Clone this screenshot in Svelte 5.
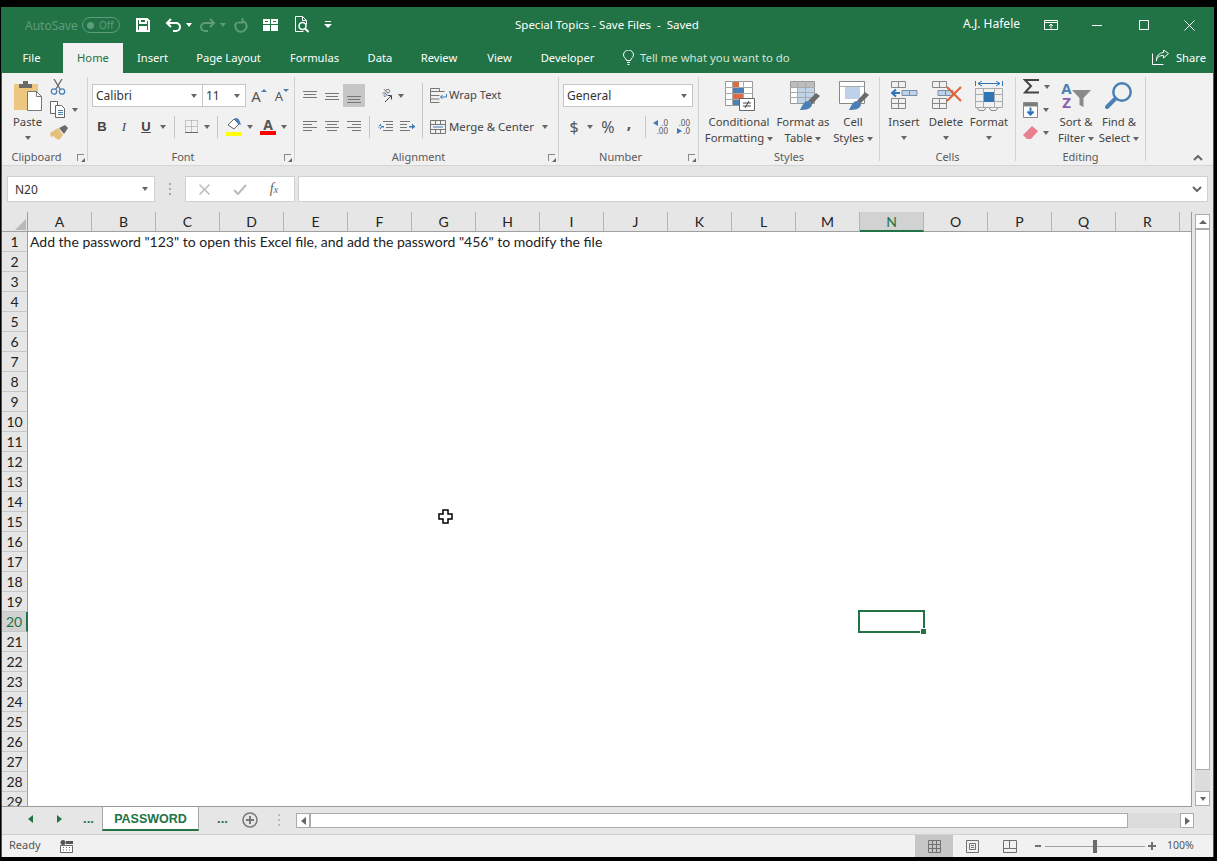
<script>
  const tabs = [
    ['File', 61], ['Home', 60], ['Insert', 59], ['Page Layout', 93], ['Formulas', 79],
    ['Data', 52], ['Review', 66], ['View', 55], ['Developer', 81]
  ];
  const cols = 'ABCDEFGHIJKLMNOPQR'.split('');
  const rows = Array.from({ length: 29 }, (_, i) => i + 1);
</script>

<div class="window">
  <header class="titlebar">
    <div class="qat">
      <span class="autosave">AutoSave</span>
      <span class="toggle"><i></i><b>Off</b></span>
      <span class="q q1"><svg width="16" height="16" viewBox="0 0 16 16" fill="none" stroke="#fff" stroke-width="2"><path d="M2 2h10l2 2v10H2z"/><path d="M5 2v4h6V2"/><path d="M5 14v-4h6v4" fill="#fff"/></svg></span>
      <span class="q q2"><svg width="17" height="14" viewBox="0 0 17 14" fill="none" stroke="#fff" stroke-width="2"><path d="M6 1 2 5l4 4M2 5h9a4 4 0 0 1 0 8H8"/></svg></span>
      <span class="car white"></span>
      <span class="q q3"><svg width="17" height="14" viewBox="0 0 17 14" fill="none" stroke="#5e9c7b" stroke-width="2"><path d="m11 1 4 4-4 4m4-4H6a4 4 0 0 0 0 8h3"/></svg></span>
      <span class="car dim"></span>
      <span class="q q4"><svg width="15" height="15" viewBox="0 0 15 15" fill="none" stroke="#5e9c7b" stroke-width="2"><path d="M9.500 2.800a5.600 5.600 0 1 1-5.500 1.400M9.500 0v4.500H5"/></svg></span>
      <span class="q q5"><svg width="16" height="14" viewBox="0 0 16 14" fill="#fff"><path d="M0 1h7v5H0zM8 1h7v5H8zM0 7h7v6H0zM8 7h7v6H8z"/><path d="M2 3h3v1H2zM10 3h3v1h-3z" fill="#217346"/></svg></span>
      <span class="q q6"><svg width="16" height="18" viewBox="0 0 16 18" fill="none" stroke="#fff"><path d="M1.500.500h7l4 4v4M8.500.500v4h4M1.500.500v15h8"/><circle cx="8.500" cy="10" r="3.500" stroke-width="1.500"/><path d="m11 12.500 3.500 3.500" stroke-width="2"/></svg></span>
      <span class="q q7"><svg width="8" height="8" viewBox="0 0 8 8" fill="#fff"><path d="M1 0h6v1H1zM0 3h8L4 7z"/></svg></span>
    </div>
    <div class="doc">Special Topics - Save Files&nbsp; - &nbsp;Saved</div>
    <div class="user">A.J. Hafele</div>
    <div class="ctl"><svg width="14" height="10" viewBox="0 0 14 10" fill="none" stroke="#fff"><path d="M.5.500h13v9H.5zM.5 2.500h13M7 8.500V4M5 6l2-2 2 2"/></svg></div>
    <div class="ctl"><svg width="10" height="1" viewBox="0 0 10 1" fill="#fff"><path d="M0 0h10v1H0z"/></svg></div>
    <div class="ctl"><svg width="10" height="10" viewBox="0 0 10 10" fill="none" stroke="#fff"><path d="M.5.500h9v9h-9z"/></svg></div>
    <div class="ctl"><svg width="11" height="11" viewBox="0 0 11 11" fill="none" stroke="#fff"><path d="m.5.500 10 10m0-10-10 10"/></svg></div>
  </header>

  <nav class="tabs">
    {#each tabs as [name, w]}
      <span class="tab" class:active={name === 'Home'} style="width:{w}px">{name}</span>
    {/each}
    <span class="bulb"><svg width="11" height="15" viewBox="0 0 11 15" fill="none" stroke="#fff"><path d="M3.500 10.500C3 8 .5 7.500.5 5a5 5 0 0 1 10 0c0 2.500-2.500 3-3 5.500zM4 12.500h3M4.500 14.500h2"/></svg></span>
    <span class="tell">Tell me what you want to do</span>
    <span class="share"><svg width="17" height="15" viewBox="0 0 17 15" fill="none" stroke="#fff"><path d="M.5 3.500v11h11M4.500 11c0-4 3-5.500 7-5.500V8l5-4.500-5-3.500v2.500C7 3 4 6 4.500 11z"/></svg><span>Share</span></span>
  </nav>

  <section class="ribbon">
    <div class="group g-clip">
      <div class="body clip">
        <div class="big paste">
          <svg width="30" height="30" viewBox="0 0 30 30"><path d="M1 3h24v26H1z" fill="#edc77f"/><path d="M6 3h4V0h5v3h4v4H6z" fill="#6b6b6b"/><path d="M14.500 10.500h9l5 5v14h-14z" fill="#fff" stroke="#777"/><path d="M23.500 10.500v5h5" fill="none" stroke="#777"/></svg>
          <span class="t1">Paste</span><i class="car"></i>
        </div>
        <div class="clipcol">
          <span class="r19"><svg width="16" height="16" viewBox="0 0 16 16" fill="none"><path d="m4 0 6 10M12 0 6 10" stroke="#666" stroke-width="1.300"/><circle cx="4" cy="12.500" r="2.700" stroke="#4b80b6" stroke-width="1.300"/><circle cx="12" cy="12.500" r="2.700" stroke="#4b80b6" stroke-width="1.300"/></svg></span>
          <span class="r19"><svg width="16" height="17" viewBox="0 0 16 17" fill="#fff" stroke="#666"><path d="M.5.500h7v12h-7z"/><path d="M5.500 4.500h6l3 3v9h-9z"/><path d="M8 9.500h5M8 11.500h5M8 13.500h5" stroke="#4b80b6"/></svg><i class="car ml"></i></span>
          <span class="r19"><svg width="18" height="15" viewBox="0 0 18 15"><path d="M0 8 8 3l5 7-4 5-4-2-1-2-3 1z" fill="#e5c07b"/><path d="m9 3 6-3 3 3-4 6z" fill="#6a6a6a"/></svg></span>
        </div>
      </div>
      <div class="label lp">Clipboard<i class="launch"></i></div>
    </div>

    <div class="group g-font">
      <div class="body rows">
        <div class="row r1 pl4">
          <span class="box fontname">Calibri<i class="car"></i></span>
          <span class="box fontsize">11<i class="car"></i></span>
          <span class="cell w26 grow"><b class="biga">A</b><i class="up"></i></span>
          <span class="cell w20 grow"><b class="biga sm">A</b><i class="down"></i></span>
        </div>
        <div class="row r2 pl3">
          <span class="cell w22 btxt"><b>B</b></span>
          <span class="cell w22 btxt"><em>I</em></span>
          <span class="cell w22 btxt"><b class="u">U</b></span>
          <span class="cell w12"><i class="car"></i></span>
          <span class="sep m5"></span>
          <span class="cell w22"><svg width="13" height="13" viewBox="0 0 13 13" fill="none" stroke="#999" stroke-dasharray="1 1"><path d="M.5.500h12v12H.5zM6.500.500v12M.5 6.500h12"/><path d="M0 12.500h13" stroke="#666" stroke-dasharray="none"/></svg></span>
          <span class="cell w10"><i class="car"></i></span>
          <span class="sep m5"></span>
          <span class="cell w22"><svg width="17" height="19" viewBox="0 0 17 19"><path d="M2 8 8 2l5 5-5 5z" fill="#fff" stroke="#666"/><path d="M8 2c2-2 5-1 6 3l1 3-3-1z" fill="#4b80b6"/><path d="M0 15h16v4H0z" fill="#ff0"/></svg></span>
          <span class="cell w10"><i class="car"></i></span>
          <span class="cell w22 ml2 fc"><b>A</b><i></i></span>
          <span class="cell w10"><i class="car"></i></span>
        </div>
      </div>
      <div class="label lp">Font<i class="launch"></i></div>
    </div>

    <div class="group g-align">
      <div class="body split">
        <div class="rows alignleft">
          <div class="row r1 pl4">
            <span class="cell w22"><svg width="14" height="14" viewBox="0 0 14 14" fill="#777"><path d="M0 2h14v1H0zM1 5h12v1H1zM0 8h14v1H0z"/></svg></span>
            <span class="cell w22"><svg width="14" height="14" viewBox="0 0 14 14" fill="#777"><path d="M0 4h14v1H0zM1 7h12v1H1zM0 10h14v1H0z"/></svg></span>
            <span class="cell w22 on"><svg width="14" height="14" viewBox="0 0 14 14" fill="#777"><path d="M0 7h14v1H0zM1 10h12v1H1zM0 13h14v1H0z"/></svg></span>
            <span class="cell w24 ml8"><svg width="17" height="16" viewBox="0 0 17 16" fill="none" stroke="#666"><text x="6" y="10" class="ab" transform="rotate(-45 6 8)">ab</text><path d="m8 14 6-6M14.500 7.500v4M14.500 7.500h-4" stroke="#444"/></svg></span>
            <span class="cell w8"><i class="car"></i></span>
          </div>
          <div class="row r2 pl4">
            <span class="cell w22"><svg width="14" height="11" viewBox="0 0 14 11" fill="#777"><path d="M0 0h14v1H0zM0 3h9v1H0zM0 6h14v1H0zM0 9h9v1H0z"/></svg></span>
            <span class="cell w22"><svg width="14" height="11" viewBox="0 0 14 11" fill="#777"><path d="M0 0h14v1H0zM2 3h10v1H2zM0 6h14v1H0zM2 9h10v1H2z"/></svg></span>
            <span class="cell w22"><svg width="14" height="11" viewBox="0 0 14 11" fill="#777"><path d="M0 0h14v1H0zM5 3h9v1H5zM0 6h14v1H0zM5 9h9v1H5z"/></svg></span>
            <span class="sep m4"></span>
            <span class="cell w22 ml4c"><svg width="15" height="11" viewBox="0 0 15 11"><path d="M5 0h10v1H5zM8 3h7v1H8zM8 6h7v1H8zM5 9h10v1H5z" fill="#777"/><path d="M0 5h6v1.500H0zM3 2.500 0 5.500l3 3z" fill="#3d7ab8"/></svg></span>
            <span class="cell w22"><svg width="15" height="11" viewBox="0 0 15 11"><path d="M0 0h10v1H0zM0 3h7v1H0zM0 6h7v1H0zM0 9h10v1H0z" fill="#777"/><path d="M9 5h6v1.500H9zM12 2.500l3 3-3 3z" fill="#3d7ab8"/></svg></span>
          </div>
        </div>
        <div class="rows alignright">
          <div class="row r1"><svg width="17" height="15" viewBox="0 0 17 15" fill="none" stroke="#777"><path d="M.5.500h9v3h-9zM.5 3.500h14M.5 3.500v11h9M.5 7.500h9M.5 11h9"/><path d="M16.500 6v3h-6M12.500 7l-2 2 2 2" stroke="#3d7ab8"/></svg><span class="lbl wrap">Wrap Text</span></div>
          <div class="row r2"><svg width="16" height="14" viewBox="0 0 16 14" fill="none" stroke="#777"><path d="M.5.500h15v13H.5zM.5 4.500h15M.5 9.500h15M5.500.500v4M10.500.500v4M5.500 9.500v4M10.500 9.500v4"/><path d="M3 7h10" stroke="#3d7ab8"/></svg><span class="lbl">Merge &amp; Center</span><i class="car mergecar"></i></div>
        </div>
      </div>
      <div class="label lp">Alignment<i class="launch"></i></div>
    </div>

    <div class="group g-num">
      <div class="body rows">
        <div class="row r1 pl4"><span class="box numfmt">General<i class="car"></i></span></div>
        <div class="row r2 pl4">
          <span class="cell w22 sym">$</span>
          <span class="cell w10"><i class="car"></i></span>
          <span class="cell w26 sym">%</span>
          <span class="cell w16 sym comma">,</span>
          <span class="sep m8"></span>
          <span class="dec ml7">
            <span class="decline"><i class="al"></i><span>.0</span></span>
            <span class="decline end"><span>.00</span></span>
          </span>
          <span class="dec ml7">
            <span class="decline end"><span>.00</span></span>
            <span class="decline"><i class="ar"></i><span>.0</span></span>
          </span>
        </div>
      </div>
      <div class="label lp">Number<i class="launch"></i></div>
    </div>

    <div class="group g-styles">
      <div class="body flexrow">
        <div class="big w80">
          <svg class="s1" width="30" height="30" viewBox="0 0 30 30"><path d="M.5.500h27v24H.5z" fill="#fff" stroke="#999"/><path d="M7.500 0v25M18.500 0v25M0 6.500h28M0 12.500h28M0 18.500h28" stroke="#aaa"/><path d="M8 1h6v5H8zM8 13h10v5H8z" fill="#dd6b45"/><path d="M8 7h11v5H8zM8 19h6v5H8z" fill="#4b80b6"/><path d="M14.500 17.500h15v12h-15z" fill="#fff" stroke="#666"/><path d="M18 22h8M18 25h8M24 20l-4 7" stroke="#444" fill="none"/></svg>
          <span class="t1">Conditional</span><span class="t2">Formatting<i class="car ml3"></i></span>
        </div>
        <div class="big w48">
          <svg class="s4" width="30" height="30" viewBox="0 0 30 30"><path d="M.5.500h24v22H.5z" fill="#fff" stroke="#999"/><path d="M1 1h23v5H1z" fill="#bdbdbd"/><path d="M7 6h17v16H7z" fill="#c0d4e8"/><path d="M7.500 0v23M15.500 0v23M0 6.500h25M0 11.500h25M0 16.500h25" stroke="#aaa"/><path d="m18 20 8-8 4 3-8 8z" fill="#6b6b6b"/><path d="M18 20c-4 0-6 5-8 9 6 0 12-1 12-6z" fill="#4b80b6"/></svg>
          <span class="t1 nowrap">Format as</span><span class="t2">Table<i class="car ml3"></i></span>
        </div>
        <div class="big w52">
          <svg class="s2" width="30" height="30" viewBox="0 0 30 30"><path d="M.5.500h25v22H.5z" fill="#fff" stroke="#888"/><path d="M.5 5.500h25" stroke="#aaa"/><path d="M6 6h15v12H6z" fill="#bdd2e8"/><path d="m18 20 8-9 4 3-9 9z" fill="#6b6b6b"/><path d="M18 20c-4 0-6 5-8 9 6 0 12-1 12-6z" fill="#4b80b6"/></svg>
          <span class="t1">Cell</span><span class="t2">Styles<i class="car ml3"></i></span>
        </div>
      </div>
      <div class="label">Styles</div>
    </div>

    <div class="group g-cells">
      <div class="body flexrow">
        <div class="big w48">
          <svg class="s1" width="27" height="30" viewBox="0 0 27 30" fill="none" stroke="#888"><path d="M.5.500h14v6H.5zM7.500.500v6M.5 17.500h14v10H.5zM.5 22.500h14M7.500 17.500v10"/><path d="M11 9.500h15v5H11zM18.500 9.500v5" fill="#bdd2e8" stroke="#7a8ea3"/><path d="M1 12h8M5 8.500 1 12l4 3.500" stroke="#2f75b5" stroke-width="2"/></svg>
          <span class="t1">Insert</span><i class="car big-car"></i>
        </div>
        <div class="big w36">
          <svg class="s2" width="30" height="30" viewBox="0 0 30 30" fill="none" stroke="#888"><path d="M.5.500h14v6H.5zM7.500.500v6M.5 17.500h14v10H.5zM.5 22.500h14M7.500 17.500v10"/><path d="M6 9.500h15v5H6zM13.500 9.500v5" fill="#bdd2e8" stroke="#7a8ea3"/><path d="m15 6 14 14M29 6 15 20" stroke="#e0663a" stroke-width="2.200"/></svg>
          <span class="t1">Delete</span><i class="car big-car"></i>
        </div>
        <div class="big w50">
          <svg width="29" height="30" viewBox="0 0 29 30" fill="none" stroke="#888"><path d="M.5 0v5M27.500 0v5M3 2.500h22M7 0 3 2.500 7 5M21 0l4 2.500L21 5" stroke="#2f75b5"/><path d="M.5 7.500h27v19H.5zM8.500 7.500v19M19.500 7.500v19M.5 13.500h27M.5 20.500h27" stroke="#aaa"/><path d="M9 11h10v10H9z" fill="#2f75b5" stroke="none"/><path d="M2 26.500l2 3h5l2-3M14 26.500l2 3h5l2-3"/></svg>
          <span class="t1">Format</span><i class="car big-car"></i>
        </div>
      </div>
      <div class="label">Cells</div>
    </div>

    <div class="group g-edit">
      <div class="body flexrow">
        <div class="clipcol editcol">
          <span class="r19"><svg width="16" height="15" viewBox="0 0 16 15" fill="none" stroke="#444" stroke-width="2"><path d="M16 1H2l6 6-6 6.500h14"/></svg><i class="car ml4"></i></span>
          <span class="r19"><svg width="15" height="16" viewBox="0 0 15 16" fill="#fff" stroke="#888"><path d="M.5.500h14v15H.5z"/><path d="M1 1h13v3H1z" fill="#777"/><path d="M7.500 5.500v7M4.500 9.500l3 3 3-3" stroke="#2f75b5" stroke-width="2" fill="none"/></svg><i class="car ml4"></i></span>
          <span class="r19"><svg width="15" height="14" viewBox="0 0 15 14"><path d="M9 0l6 5-7 8H4L0 9z" fill="#e8808f"/></svg><i class="car ml4"></i></span>
        </div>
        <div class="big w40">
          <svg width="30" height="30" viewBox="0 0 30 30"><path d="M11 9h19l-7.500 8v9l-4-2v-7z" fill="#8a8a8a"/><text x="5.500" y="13" class="az a">A</text><text x="5.500" y="27" class="az z">Z</text></svg>
          <span class="t1">Sort &amp;</span><span class="t2">Filter<i class="car ml3"></i></span>
        </div>
        <div class="big w46">
          <svg width="28" height="30" viewBox="0 0 28 30" fill="none" stroke="#4b80b6"><circle cx="17" cy="11" r="8.700" stroke-width="2.500"/><path d="m10 18-8 8" stroke-width="4" stroke-linecap="round"/></svg>
          <span class="t1">Find &amp;</span><span class="t2">Select<i class="car ml3"></i></span>
        </div>
      </div>
      <div class="label">Editing</div>
    </div>

    <div class="collapse"><svg width="10" height="6" viewBox="0 0 10 6" fill="none" stroke="#666" stroke-width="2"><path d="m1 5 4-4 4 4"/></svg></div>
  </section>

  <section class="formula">
    <div class="namebox">N20<i class="car"></i></div>
    <div class="dots"></div>
    <div class="fxbox">
      <span class="cell fxc"><svg width="11" height="11" viewBox="0 0 11 11" fill="none" stroke="#bbb" stroke-width="1.500"><path d="m.5.500 10 10m0-10-10 10"/></svg></span>
      <span class="cell fxc"><svg width="14" height="11" viewBox="0 0 14 11" fill="none" stroke="#bbb" stroke-width="2"><path d="m1 6 4 4 8-9"/></svg></span>
      <span class="cell fxc fx">f<small>x</small></span>
    </div>
    <div class="finput"><svg width="10" height="6" viewBox="0 0 10 6" fill="none" stroke="#666" stroke-width="2"><path d="m1 1 4 4 4-4"/></svg></div>
  </section>

  <section class="sheet">
    <div class="grid">
      <div class="corner"><i></i></div>
      {#each cols as c}
        <div class="ch" class:hl={c === 'N'}>{c}</div>
      {/each}
      <div class="ch filler"></div>
      {#each rows as r}
        <div class="rh" class:hl={r === 20}>{r}</div>
        {#if r === 1}
          <div class="text">Add the password "123" to open this Excel file, and add the password "456" to modify the file</div>
        {/if}
      {/each}
      <div class="sel"><i></i></div>
    </div>
    <div class="vscroll">
      <span class="sbtn"><i class="tri-up"></i></span>
      <span class="vthumb"></span>
      <span class="sbtn"><i class="car"></i></span>
    </div>
    <svg class="pointer" width="15" height="15" viewBox="0 0 15 15"><path d="M5 1h5v4h4v5h-4v4H5v-4H1V5h4z" fill="#fff" stroke="#000" stroke-width="1.500"/></svg>
  </section>

  <section class="sheetbar">
    <span class="nav w29"><i class="tl"></i></span>
    <span class="nav w29"><i class="tr"></i></span>
    <span class="nav w29 more">...</span>
    <span class="sheettab">PASSWORD</span>
    <span class="nav w46x more">...</span>
    <span class="plus"><svg width="16" height="16" viewBox="0 0 16 16" fill="none" stroke="#777"><circle cx="8" cy="8" r="7" stroke-width="1.500"/><path d="M8 4v8M4 8h8" stroke-width="2"/></svg></span>
    <span class="vdots"></span>
    <div class="hscroll">
      <span class="hbtn"><i class="tl gray"></i></span>
      <span class="hthumb"></span>
      <span class="htrack"></span>
      <span class="hbtn"><i class="tr gray"></i></span>
    </div>
  </section>

  <footer class="status">
    <span class="ready">Ready</span>
    <span class="macro"><svg width="13" height="13" viewBox="0 0 13 13"><circle cx="3" cy="2.500" r="2.500" fill="#555"/><path d="M6 1h7v3H6z" fill="#555"/><path d="M.5 5.500h12v7H.5z" fill="#fff" stroke="#666"/><path d="M3 7.500h1M6 7.500h1M9 7.500h1M3 10h1M6 10h1M9 10h1" stroke="#666"/></svg></span>
    <span class="viewbtn on"><svg width="13" height="13" viewBox="0 0 13 13" fill="none" stroke="#707070"><path d="M.5.500h12v12H.5zM4.500.500v12M8.500.500v12M.5 4.500h12M.5 8.500h12"/></svg></span>
    <span class="viewbtn"><svg width="13" height="13" viewBox="0 0 13 13" fill="none" stroke="#707070"><path d="M.5.500h12v12H.5zM3.500 3.500h6v6h-6zM5 5.500h3M5 7.500h3"/></svg></span>
    <span class="viewbtn"><svg width="14" height="13" viewBox="0 0 14 13" fill="none" stroke="#707070"><path d="M.5.500h13v12H.5zM.5 8.500h6M6.500.500v8M13 8.500H7"/></svg></span>
    <span class="minus"></span>
    <span class="slider"><i></i></span>
    <span class="zplus"></span>
    <span class="zoom">100%</span>
  </footer>
</div>

<style>
  :global(html), :global(body) { margin: 0; background: #000; overflow: hidden; }
  .window {
    box-sizing: border-box; width: 1213px; height: 850px; margin: 7px 0 0 1px;
    border: 1px solid #217346; border-top: 0; display: flex; flex-direction: column;
    font-family: "Noto Sans", sans-serif; font-size: 11.300px; color: #444; background: #e6e6e6;
  }
  i { display: block; font-style: normal; }
  svg { display: block; flex: none; }

  .titlebar { height: 36px; background: #217346; display: flex; align-items: center; color: #fff; flex: none; }
  .qat { width: 513px; display: flex; align-items: center; padding-left: 23px; box-sizing: border-box; flex: none; }
  .autosave { color: #5e9c7b; width: 50px; font-size: 12px; }
  .toggle { box-sizing: border-box; margin-left: 7px; width: 38px; height: 16px; border: 1px solid #5e9c7b; border-radius: 8px; display: flex; align-items: center; padding-left: 4px; color: #5e9c7b; gap: 5px; font-size: 10px; }
  .toggle i { width: 7px; height: 7px; border-radius: 50%; background: #5e9c7b; }
  .toggle b { font-weight: 400; }
  .q { display: flex; align-items: center; justify-content: center; }
  .q1 { margin-left: 15px; }
  .q2 { margin-left: 14px; }
  .q3 { margin-left: 7px; }
  .q4 { margin-left: 7px; }
  .q5 { margin-left: 15px; }
  .q6 { margin-left: 15px; }
  .q7 { margin-left: 14px; }
  .qat .car { margin-left: 4px; }
  .doc { flex: 1; font-size: 11.500px; white-space: nowrap; margin-top: -2px; }
  .user { margin-right: 8px; font-size: 12px; margin-top: -3px; }
  .ctl { width: 46.250px; display: flex; justify-content: center; }

  .car { width: 0; height: 0; border: 3.500px solid transparent; border-top: 4px solid #666; border-bottom: 0; flex: none; }
  .car.white { border-top-color: #fff; }
  .car.dim { border-top-color: #5e9c7b; }
  .ml { margin-left: 6px; }
  .ml3 { margin-left: 3px; display: inline-block; vertical-align: middle; }
  .ml4 { margin-left: 5px; }

  .tabs { height: 30px; background: #217346; display: flex; align-items: center; color: #fff; flex: none; font-size: 11.200px; }
  .tab { height: 30px; line-height: 30px; text-align: center; flex: none; white-space: nowrap; box-sizing: border-box; }
  .tab:first-child { padding-right: 2px; }
  .tab.active { background: #f1f1f1; color: #217346; }
  .bulb { margin-left: 15px; margin-top: -1px; }
  .tell { margin-left: 6px; color: #d3e3da; white-space: nowrap; font-size: 11.350px; margin-top: -2px; }
  .share { margin-left: auto; margin-right: 7px; display: flex; align-items: center; gap: 7px; margin-top: -2px; }

  .ribbon { height: 93px; background: #f1f1f1; border-bottom: 1px solid #d5d5d5; box-sizing: border-box; display: flex; flex: none; padding-top: 4px; position: relative; }
  .group { height: 84px; box-sizing: border-box; border-right: 1px solid #d2d2d2; display: flex; flex-direction: column; flex: none; }
  .body { height: 72px; flex: none; }
  .label { height: 16px; line-height: 16px; margin-bottom: -4px; text-align: center; color: #5a5a5a; position: relative; font-size: 11px; }
  .lp { padding-right: 16px; }
  .launch { position: absolute; right: 3px; top: 5px; width: 6px; height: 6px; border-left: 1px solid #888; border-top: 1px solid #888; }
  .launch::after { content: ""; position: absolute; right: -1px; bottom: -1px; border: 2px solid #666; border-top-color: transparent; border-left-color: transparent; }
  .g-clip { width: 86px; } .g-font { width: 207px; } .g-align { width: 264px; } .g-num { width: 140px; }
  .g-styles { width: 181px; } .g-cells { width: 136px; } .g-edit { width: 130px; }

  .big { display: flex; flex-direction: column; align-items: center; padding-top: 4px; flex: none; }
  .big svg { height: 30px; }
  .big svg.s1 { margin-left: 1px; } .big svg.s2 { margin-left: 2px; } .big svg.s4 { margin-left: 4px; }
  .t1 { height: 16px; line-height: 16px; margin-top: 3px; white-space: nowrap; }
  .t2 { height: 16px; line-height: 16px; white-space: nowrap; }
  .big > .car { margin-top: 6px; }
  .w80 { width: 80px; } .w48 { width: 48px; } .w52 { width: 52px; } .w36 { width: 36px; } .w50 { width: 50px; } .w40 { width: 40px; } .w46 { width: 46px; }
  .flexrow { display: flex; }
  .clip { display: flex; padding-left: 6px; }
  .paste { width: 39px; }
  .clipcol { display: flex; flex-direction: column; gap: 4px; margin-left: 3px; }
  .editcol { width: 37px; margin-left: 3px; padding-left: 4px; box-sizing: border-box; }
  .r19 { height: 19px; display: flex; align-items: center; }

  .rows { display: flex; flex-direction: column; padding-top: 7px; box-sizing: border-box; }
  .row { display: flex; align-items: center; }
  .r1 { height: 23px; }
  .r2 { height: 23px; margin-top: 8px; }
  .pl4 { padding-left: 4px; } .pl3 { padding-left: 3px; }
  .box { background: #fff; border: 1px solid #c6c6c6; box-sizing: border-box; height: 23px; display: flex; align-items: center; padding-left: 3px; justify-content: space-between; padding-right: 5px; font-size: 12px; color: #333; }
  .fontname { width: 111px; }
  .fontsize { width: 43px; border-left: 0; }
  .numfmt { width: 130px; }
  .cell { display: flex; align-items: center; justify-content: center; flex: none; height: 23px; }
  .on { background: #c6c6c6; }
  .w22 { width: 22px; } .w12 { width: 12px; } .w10 { width: 10px; } .w26 { width: 26px; } .w20 { width: 20px; } .w24 { width: 24px; } .w8 { width: 8px; } .w16 { width: 16px; }
  .ml2 { margin-left: 2px; } .ml8 { margin-left: 8px; } .ml7 { margin-left: 7px; } .ml4c { margin-left: 4px; }
  .sep { width: 1px; height: 22px; background: #c6c6c6; flex: none; }
  .m5 { margin: 0 5px; } .m4 { margin-left: 4px; } .m8 { margin-left: 8px; }
  .btxt { font-size: 13px; color: #444; font-family: "Liberation Sans", sans-serif; }
  .btxt em { font-family: "Liberation Serif", serif; }
  .u { text-decoration: underline; }
  .grow { position: relative; }
  .biga { font-size: 15px; font-weight: 400; color: #555; }
  .biga.sm { font-size: 13px; }
  .up, .down { border: 3px solid transparent; width: 0; height: 0; margin-top: -10px; }
  .up { border-top: 0; border-bottom: 3px solid #4b80b6; }
  .down { border-bottom: 0; border-top: 3px solid #4b80b6; }
  .fc { flex-direction: column; }
  .fc b { font: 700 14px/13px "Noto Sans", sans-serif; color: #555; }
  .fc i { width: 16px; height: 4px; background: #f00; }
  .ab { font: 8px "Noto Sans", sans-serif; fill: #666; stroke: none; }
  .dec { width: 15px; flex: none; display: flex; flex-direction: column; font-size: 8px; line-height: 8px; color: #555; }
  .decline { display: flex; align-items: center; justify-content: space-between; height: 8px; }
  .decline.end { justify-content: flex-end; }
  .al, .ar { width: 0; height: 0; border: 3px solid transparent; }
  .al { border-right: 5px solid #3d7ab8; border-left: 0; }
  .ar { border-left: 5px solid #3d7ab8; border-right: 0; margin-left: 2px; }
  .az { font: 700 15px "Noto Sans", sans-serif; text-anchor: middle; }
  .az.a { fill: #4b80b6; } .az.z { fill: #8a5cab; }
  .sym { font-size: 16px; color: #555; }
  .comma { font-weight: 700; padding-bottom: 8px; box-sizing: border-box; }

  .split { display: flex; }
  .alignleft { width: 128px; flex: none; position: relative; }
  .alignleft::after { content: ""; position: absolute; right: 0; top: 6px; height: 55px; width: 1px; background: #c6c6c6; }
  .alignright { padding-left: 7px; }
  .lbl { margin-left: 3px; font-size: 11.400px; white-space: nowrap; }
  .lbl.wrap { margin: -2px 0 0 2px; font-size: 11.200px; }
  .mergecar { margin-left: 8px; }

  .collapse { position: absolute; right: 10px; bottom: 4px; }

  .formula { height: 46px; flex: none; display: flex; padding-top: 10px; box-sizing: border-box; padding-left: 5px; }
  .namebox, .fxbox, .finput { height: 26px; box-sizing: border-box; border: 1px solid #d0d0d0; background: #fff; display: flex; align-items: center; }
  .namebox { width: 148px; padding: 0 6px 0 7px; justify-content: space-between; font-size: 12px; color: #333; }
  .dots { width: 2px; height: 12px; margin: 7px 14px 0 14px; background: repeating-linear-gradient(#aaa 0 2px, transparent 2px 5px); }
  .fxbox { width: 110px; }
  .fxc { width: 36px; }
  .fx { font: italic 14px "Liberation Serif", serif; color: #666; padding-right: 4px; box-sizing: border-box; }
  .fx small { font-size: 10px; }
  .finput { width: 910px; margin-left: 3px; justify-content: flex-end; padding-right: 5px; }

  .sheet { height: 595px; flex: none; display: flex; position: relative; }
  .grid {
    width: 1190px; height: 595px; flex: none; box-sizing: border-box; overflow: hidden; position: relative;
    display: grid; grid-template-columns: 26px repeat(18, 64px) 1fr; grid-auto-rows: 20px;
    background: #fff; border-bottom: 1px solid #9a9a9a; border-right: 1px solid #9a9a9a;
    font-family: "Lato", sans-serif; font-size: 14px; color: #222;
  }
  .corner { background: #e6e6e6; border-bottom: 1px solid #9f9f9f; border-right: 1px solid #9f9f9f; box-sizing: border-box; position: relative; }
  .corner i { position: absolute; right: 1px; bottom: 1px; width: 0; height: 0; border-left: 11px solid transparent; border-bottom: 11px solid #b8b8b8; }
  .ch { background: #e6e6e6; border-bottom: 1px solid #9f9f9f; border-right: 1px solid #b4b4b4; box-sizing: border-box; text-align: center; line-height: 20px; }
  .filler { border-right: 0; }
  .ch.hl { background: #d2d2d2; color: #217346; border-bottom: 2px solid #217346; }
  .rh { grid-column: 1; background: #e6e6e6; border-bottom: 1px solid #c6c6c6; border-right: 1px solid #9f9f9f; box-sizing: border-box; text-align: center; line-height: 20px; }
  .rh.hl { background: #d2d2d2; color: #217346; border-right: 2px solid #217346; }
  .text { grid-column: 2 / span 10; grid-row: 2; padding-left: 2px; line-height: 20px; white-space: nowrap; }
  .sel { grid-column: 15; grid-row: 21; outline: 2px solid #217346; margin: 0 1px 1px 0; position: relative; }
  .sel i { position: absolute; right: -3px; bottom: -3px; width: 5px; height: 5px; background: #217346; box-shadow: -1px -1px 0 #fff; }

  .vscroll { width: 15px; margin: 2px 0 0 3px; height: 592px; display: flex; flex-direction: column; background: #dcdcdc; }
  .sbtn { height: 15px; flex: none; background: #fff; border: 1px solid #ababab; box-sizing: border-box; display: flex; align-items: center; justify-content: center; }
  .tri-up { border: 4px solid transparent; border-bottom: 4px solid #666; border-top: 0; width: 0; height: 0; }
  .vthumb { height: 541px; flex: none; background: #fff; border: 1px solid #ababab; box-sizing: border-box; margin-bottom: auto; }
  .pointer { position: absolute; left: 436px; top: 297px; }

  .sheetbar { height: 27px; flex: none; display: flex; align-items: flex-start; }
  .nav { height: 24px; display: flex; align-items: center; justify-content: center; flex: none; }
  .w29 { width: 29px; }
  .nav:first-child { margin-left: 14px; }
  .more { color: #217346; font-weight: 700; font-size: 13px; padding-bottom: 2px; box-sizing: border-box; }
  .tl, .tr { width: 0; height: 0; border: 4px solid transparent; }
  .tl { border-right: 5px solid #217346; border-left: 0; }
  .tr { border-left: 5px solid #217346; border-right: 0; }
  .tl.gray { border-right-color: #666; } .tr.gray { border-left-color: #666; }
  .sheettab { width: 97px; height: 24px; box-sizing: border-box; background: #fff; border: 1px solid #a6a6a6; border-top: 0; border-bottom: 2px solid #217346; color: #217346; font-weight: 700; font-size: 12.500px; text-align: center; line-height: 25px; margin-left: -1px; font-family: "Liberation Sans", sans-serif; }
  .w46x { width: 47px; }
  .plus { margin: 5px 0 0 -4px; }
  .vdots { width: 2px; height: 12px; margin: 7px 16px 0 20px; background: repeating-linear-gradient(#bbb 0 2px, transparent 2px 5px); flex: none; }
  .hscroll { display: flex; width: 898px; height: 15px; margin-top: 6px; background: #dcdcdc; flex: none; }
  .hbtn { width: 14px; flex: none; height: 15px; background: #fff; border: 1px solid #ababab; box-sizing: border-box; display: flex; align-items: center; justify-content: center; }
  .hthumb { width: 818px; background: #fff; border: 1px solid #ababab; box-sizing: border-box; }
  .htrack { flex: 1; }

  .status { height: 22px; flex: none; background: #f1f1f1; border-top: 1px solid #d0d0d0; display: flex; align-items: center; }
  .ready { margin-left: 7px; width: 51px; flex: none; color: #555; font-size: 11px; margin-top: -3px; }
  .macro { width: 855px; flex: none; }
  .viewbtn { width: 38px; height: 22px; display: flex; align-items: center; justify-content: center; flex: none; }
  .minus { width: 6px; height: 2px; background: #707070; margin-left: 6px; flex: none; }
  .slider { width: 100px; height: 1px; background: #a0a0a0; margin-left: 4px; position: relative; flex: none; }
  .slider i { position: absolute; left: 48px; top: -6px; width: 4px; height: 13px; background: #6a6a6a; }
  .zplus { width: 8px; height: 8px; margin-left: 3px; flex: none; background: linear-gradient(#707070,#707070) center/100% 2px no-repeat, linear-gradient(#707070,#707070) center/2px 100% no-repeat; }
  .zoom { margin-left: 11px; color: #555; font-size: 10.500px; white-space: nowrap; margin-top: -3px; }
</style>
